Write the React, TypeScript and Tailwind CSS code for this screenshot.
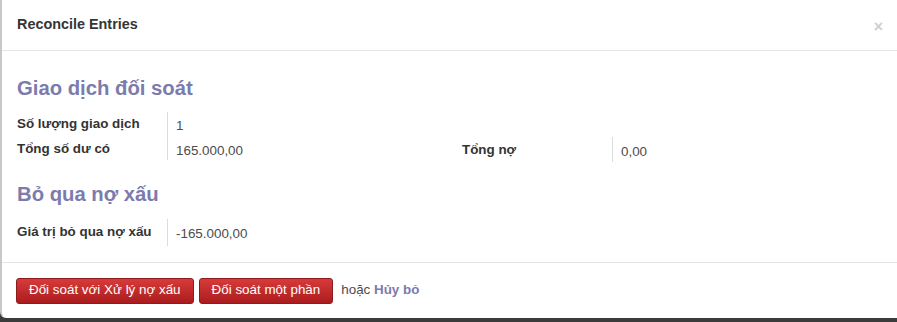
export default function App() {
  return (
    <div className="h-[322px] w-[897px] overflow-hidden bg-[#3b3b3b] font-['Liberation_Sans',Arial,sans-serif] text-[13.4px] text-[#4c4c4c]">
      <div className="flex h-[318px] flex-col rounded-bl-[6px] border-l-2 border-[#c8c8c8] bg-white">
        {/* header */}
        <div className="flex h-[51px] items-center justify-between border-b border-[#e5e5e5] pl-[15px] pr-[14px]">
          <h3 className="text-[14.4px] font-bold text-[#353535]">Reconcile Entries</h3>
          <span className="mt-[4px] text-[16px] font-bold leading-none text-[#cfcfcf]">×</span>
        </div>

        {/* body */}
        <div className="border-b border-[#e5e5e5] pb-[16px] pl-[15px] pr-[15px] pt-[25px]">
          <h2 className="text-[20.3px] font-bold leading-[24px] text-[#7c7bad]">Giao dịch đối soát</h2>
          <div className="mt-[12px] grid grid-cols-[150px_295px_150px_1fr]">
            <div className="h-[20px] pt-[4px] font-bold leading-[16px] text-[#333]">Số lượng giao dịch</div>
            <div className="h-[20px] border-l border-[#dcdcdc] pl-[8px] pt-[6px] leading-[16px]">1</div>
            <div />
            <div />
            <div className="h-[28px] pt-[9px] font-bold leading-[16px] text-[#333]">Tổng số dư có</div>
            <div className="h-[28px] border-l border-[#dcdcdc] pl-[8px] pt-[11px] leading-[16px]">165.000,00</div>
            <div className="mt-[5px] h-[25px] pt-[5px] font-bold leading-[16px] text-[#333]">Tổng nợ</div>
            <div className="mt-[5px] h-[25px] border-l border-[#dcdcdc] pl-[8px] pt-[7px] leading-[16px]">0,00</div>
          </div>

          <h2 className="mt-[20px] text-[20.3px] font-bold leading-[24px] text-[#7c7bad]">Bỏ qua nợ xấu</h2>
          <div className="mt-[13px] grid grid-cols-[150px_1fr]">
            <div className="h-[27px] pt-[5px] font-bold leading-[16px] text-[#333]">Giá trị bỏ qua nợ xấu</div>
            <div className="h-[27px] border-l border-[#dcdcdc] pl-[8px] pt-[7px] leading-[16px]">-165.000,00</div>
          </div>
        </div>

        {/* footer */}
        <div className="flex flex-1 items-center gap-[5px] pl-[14px]">
          <button className="h-[26px] rounded-[3px] border border-[#8e1a1b] bg-gradient-to-b from-[#d83a3a] to-[#ab1c1e] px-[12px] text-[13.4px] text-white">
            Đối soát với Xử lý nợ xấu
          </button>
          <button className="h-[26px] rounded-[3px] border border-[#8e1a1b] bg-gradient-to-b from-[#d83a3a] to-[#ab1c1e] px-[12px] text-[13.4px] text-white">
            Đối soát một phần
          </button>
          <span className="ml-[3px] text-[13.4px] text-[#4c4c4c]">
            hoặc <span className="font-bold text-[#7c7bad]">Hủy bỏ</span>
          </span>
        </div>
      </div>
    </div>
  );
}
